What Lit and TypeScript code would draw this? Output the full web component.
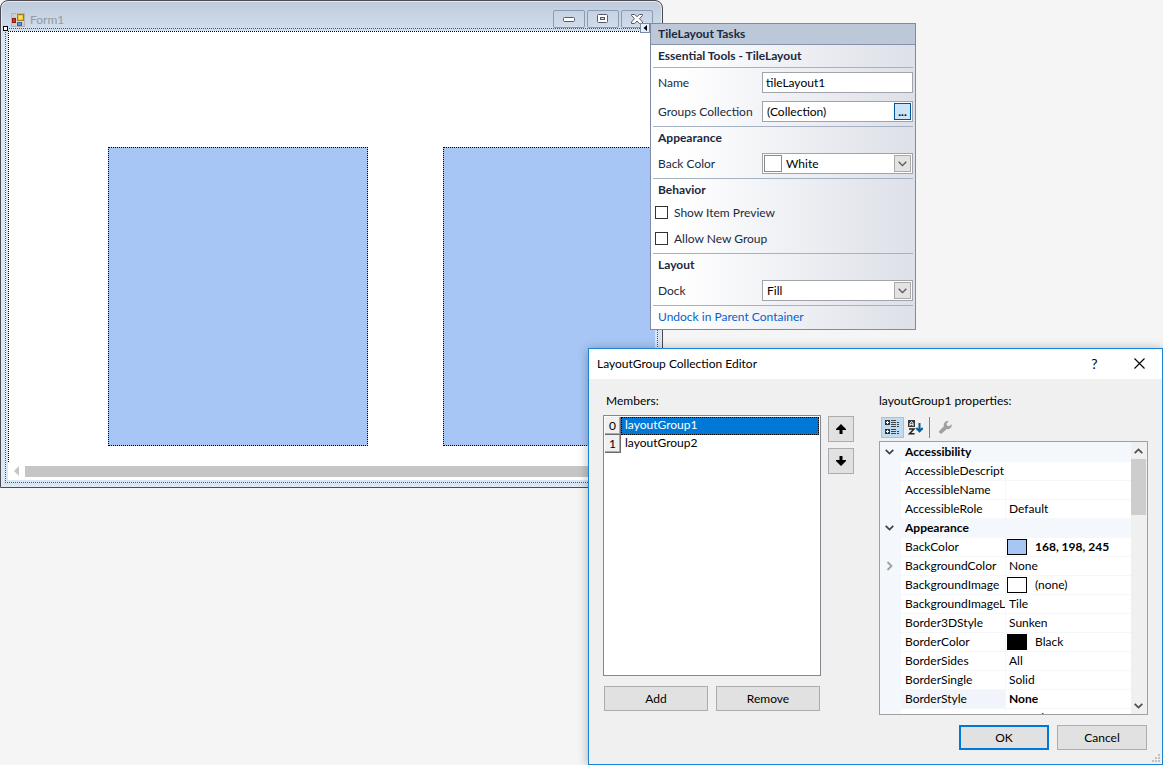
import { LitElement, html, css, svg, nothing } from "lit";
import { customElement, state } from "lit/decorators.js";
import { classMap } from "lit/directives/class-map.js";
import { styleMap } from "lit/directives/style-map.js";

const base = css`
  * { box-sizing: border-box; }
  button, input, select { font: inherit; color: inherit; margin: 0; }
  svg { display: block; }
`;

const chevron = html`<svg width="9" height="6" viewBox="0 0 9 6"><path d="M0.7 0.8L4.5 4.6L8.3 0.8" fill="none" stroke="#555" stroke-width="1.3"/></svg>`;

@customElement("design-form")
export class DesignForm extends LitElement {
  static styles = [base, css`
    :host { display: block; position: relative; border: 1px solid #4c4a50; border-radius: 8px 8px 0 0;
      background: linear-gradient(#bdcada, #d9e6f4 40px, #d9e6f4); padding: 0 7px 7px; box-shadow: inset 0 0 0 1px #e2ebf5; }
    .title { display: flex; align-items: center; height: 30px; padding: 8px 2px 0 3px; gap: 5px; color: #98999c; }
    .title h1 { font: inherit; font-size: 12px; margin: 0; flex: 1; }
    .controls { display: flex; gap: 2px; padding-bottom: 2px; }
    .controls button { width: 32px; height: 18px; padding: 0; display: grid; place-items: center;
      border: 1px solid #8c9bb5; border-radius: 2px; background: linear-gradient(#c5d2e2, #d0dceb); }
    .client { background: #fff; }
    .surface { border: 1px dotted #000; border-width: 1px 0 0 1px; padding: 115px 0 16px 99px; display: flex; gap: 75px; overflow: hidden; }
    .tile { flex: 0 0 260px; height: 299px; border: 1px dotted #000; background: #a8c6f5; }
    .scroll { display: flex; align-items: center; height: 18px; gap: 6px; padding: 0 17px 0 6px; }
    .thumb { flex: 1; height: 11px; background: #c5c5c5; }
    .selection { position: absolute; inset: 27px 4px 4px; border: 1px dotted #555; pointer-events: none; }
    .handle { position: absolute; left: 2px; top: 25px; width: 5px; height: 5px; border: 1px solid #000; background: #fff; }
    .tag { position: absolute; right: 12px; top: 22px; width: 10px; height: 10px; padding: 0; border: 1px solid #7d8ca5; background: #e3f0fb; display: grid; place-items: center; }
  `];
  render() {
    return html`
      <div class="title">
        <svg width="14" height="14" viewBox="0 0 14 14">
          <rect x=".5" y=".5" width="13" height="13" fill="#c9cdd2" stroke="#b3b3b3"/>
          <path d="M5.5 0.5v13M0.5 8.5h13" stroke="#d9d4cf"/>
          <rect x="6.5" y="1.5" width="6" height="6" fill="#f7c52c" stroke="#a87c1a"/><rect x="8" y="3" width="3" height="3" fill="#ffe27a"/>
          <rect x="1.5" y="5.5" width="3" height="4" fill="#d33a22" stroke="#8c1a10"/>
          <rect x="6.5" y="9.5" width="4" height="3" fill="#5a93ea" stroke="#2f62b8"/>
        </svg>
        <h1>Form1</h1>
        <div class="controls">
          <button aria-label="Minimize"><svg width="12" height="5" viewBox="0 0 12 5"><rect x=".5" y=".5" width="11" height="4" rx="1" fill="#fff" stroke="#5a5a66"/></svg></button>
          <button aria-label="Maximize"><svg width="12" height="10" viewBox="0 0 12 10"><rect x=".5" y=".5" width="10" height="8" rx="1" fill="#fff" stroke="#5a5a66"/><rect x="3.5" y="3.5" width="4" height="2" fill="#c8d4e4" stroke="#5a5a66"/></svg></button>
          <button aria-label="Close"><svg width="12" height="10" viewBox="0 0 12 10"><path d="M.5 .5h3.200L6 2.700 8.300.5h3.200v1L8.500 4.700l3 3.300v1.500H8.300L6 7 3.700 9.500H.5V8l3-3.300L.5 1.500z" fill="#fff" stroke="#5a5a66"/></svg></button>
        </div>
      </div>
      <div class="client">
        <div class="surface"><div class="tile"></div><div class="tile"></div></div>
        <div class="scroll">
          <svg width="5" height="10" viewBox="0 0 5 10"><path d="M5 0v10L0 5z" fill="#c5c5c5"/></svg>
          <div class="thumb"></div>
        </div>
      </div>
      <div class="selection"></div>
      <div class="handle"></div>
      <button class="tag" aria-label="Tasks"><svg width="4" height="6" viewBox="0 0 4 6"><path d="M4 0v6L.5 3z" fill="#000"/></svg></button>`;
  }
}

@customElement("task-panel")
export class TaskPanel extends LitElement {
  static styles = [base, css`
    :host { display: block; border: 1px solid #7f8ba5; color: #1b293e; background: linear-gradient(90deg, #fff 10%, #dde0e8); }
    h2, h3 { font-size: 12px; font-weight: bold; margin: 0; }
    h2 { height: 21px; line-height: 20px; padding-left: 7px; background: #bcc7d8; border-bottom: 1px solid #8592ab; }
    h3 { height: 22px; line-height: 22px; padding-left: 5px; }
    section { margin: 0 2px; }
    section + section { border-top: 1px solid #a6b1c5; }
    .rows { display: grid; gap: 8px; padding: 4px 0; }
    .row { display: grid; grid-template-columns: 109px minmax(0, 1fr); align-items: center; }
    .row label { padding-left: 5px; }
    .box { display: flex; align-items: center; height: 21px; border: 1px solid #a0a3aa; background: #fff; color: #000; padding: 1px; }
    .box input, .box select { flex: 1; min-width: 0; height: 17px; border: 0; background: none; padding: 0 3px 1px; outline: 0; appearance: none; line-height: 15px; }
    .box .text { padding: 0 2px 1px; }
    .box .swatch + select { padding-left: 4px; }
    .more { width: 17px; height: 17px; padding: 0; border: 1px solid #005499; background: #cce4f7; line-height: 12px; font-weight: bold; }
    .arrow { display: grid; place-items: center; width: 17px; height: 17px; border: 1px solid #a9a9a9; background: #e3e3e3; }
    .swatch { width: 18px; height: 17px; border: 1px solid #8a8a8a; background: #fff; }
    .checks { display: grid; gap: 13px; padding: 5px 0 8px 2px; }
    .checks label { display: flex; align-items: center; gap: 6px; height: 13px; }
    .checks input { appearance: none; width: 13px; height: 13px; border: 1px solid #333; background: #fff; }
    .checks input:checked { background: #333; box-shadow: inset 0 0 0 2px #fff; }
    .link { padding-left: 5px; height: 24px; line-height: 22px; }
    a { color: #0a61c9; text-decoration: none; }
  `];
  render() {
    return html`
      <h2>TileLayout Tasks</h2>
      <section><h3>Essential Tools - TileLayout</h3></section>
      <section class="rows">
        <div class="row"><label for="name">Name</label><div class="box"><input id="name" class="text" value="tileLayout1"></div></div>
        <div class="row"><label for="groups">Groups Collection</label><div class="box"><input id="groups" readonly value="(Collection)"><button class="more" aria-label="Edit collection">...</button></div></div>
      </section>
      <section>
        <h3>Appearance</h3>
        <div class="rows"><div class="row"><label for="back">Back Color</label><div class="box"><span class="swatch"></span><select id="back"><option>White</option></select><span class="arrow">${chevron}</span></div></div></div>
      </section>
      <section>
        <h3>Behavior</h3>
        <div class="checks">
          <label><input type="checkbox">Show Item Preview</label>
          <label><input type="checkbox">Allow New Group</label>
        </div>
      </section>
      <section>
        <h3>Layout</h3>
        <div class="rows"><div class="row"><label for="dock">Dock</label><div class="box"><select id="dock"><option>Fill</option></select><span class="arrow">${chevron}</span></div></div></div>
      </section>
      <section class="link"><a href="#undock">Undock in Parent Container</a></section>`;
  }
}

interface Prop { name: string; value?: string; swatch?: string; bold?: boolean; category?: boolean; expandable?: boolean; selected?: boolean; }

const PROPS: Prop[] = [
  { name: "Accessibility", category: true },
  { name: "AccessibleDescript" },
  { name: "AccessibleName" },
  { name: "AccessibleRole", value: "Default" },
  { name: "Appearance", category: true },
  { name: "BackColor", value: "168, 198, 245", swatch: "#a8c6f5", bold: true },
  { name: "BackgroundColor", value: "None", expandable: true },
  { name: "BackgroundImage", value: "(none)", swatch: "#fff" },
  { name: "BackgroundImageL", value: "Tile" },
  { name: "Border3DStyle", value: "Sunken" },
  { name: "BorderColor", value: "Black", swatch: "#000" },
  { name: "BorderSides", value: "All" },
  { name: "BorderSingle", value: "Solid" },
  { name: "BorderStyle", value: "None", bold: true, selected: true },
  { name: "Cursor", value: "Default" },
];

@customElement("property-grid")
export class PropertyGrid extends LitElement {
  static styles = [base, css`
    :host { display: flex; border: 1px solid #a0a0a0; background: #f4f7fc; overflow: hidden; }
    .view { flex: 1; padding-top: 1px; overflow: hidden; }
    table { width: 100%; table-layout: fixed; border-collapse: separate; border-spacing: 0; }
    .gutter { width: 21px; }
    .name { width: 105px; }
    td, th { height: 19px; padding: 0 0 0 3px; line-height: 18px; text-align: left; font-weight: normal; white-space: nowrap;
      overflow: hidden; border-bottom: 1px solid #f4f7fc; background: #fff; }
    th { padding-left: 4px; }
    th.cat { font-weight: bold; background: #f4f7fc; }
    td.mark { background: #f4f7fc; padding: 0 0 0 5px; }
    th.prop { border-right: 1px solid #f4f7fc; }
    th.selected { background: #f1f5fb; }
    td.bold { font-weight: bold; }
    td.swatched { padding-left: 1px; }
    .cell { display: flex; align-items: center; gap: 8px; height: 18px; }
    .swatch { width: 20px; height: 16px; border: 1px solid #000; }
    .bar { width: 16px; padding-right: 1px; display: flex; flex-direction: column; background: #f0f0f0; }
    .bar .arrow { height: 17px; display: grid; place-items: center; }
    .thumb { height: 56px; background: #cdcdcd; }
    .rest { flex: 1; }
  `];
  render() {
    const row = (p: Prop) => p.category
      ? html`<tr><td class="mark"><svg width="9" height="6" viewBox="0 0 9 6"><path d="M.7 .8L4.5 4.6L8.3 .8" fill="none" stroke="#444" stroke-width="1.8"/></svg></td><th class="cat" colspan="2">${p.name}</th></tr>`
      : html`<tr>
          <td class="mark">${p.expandable ? html`<svg width="9" height="10" viewBox="0 0 9 10"><path d="M2.5 1L6.5 5L2.5 9" fill="none" stroke="#a0a0a0" stroke-width="1.8"/></svg>` : nothing}</td>
          <th class=${classMap({ prop: true, selected: !!p.selected })} scope="row">${p.name}</th>
          <td class=${classMap({ bold: !!p.bold, swatched: !!p.swatch })}>${p.swatch
            ? html`<div class="cell"><span class="swatch" style=${styleMap({ background: p.swatch })}></span>${p.value}</div>`
            : p.value ?? nothing}</td></tr>`;
    return html`
      <div class="view"><table><colgroup><col class="gutter"><col class="name"><col></colgroup><tbody>${PROPS.map(row)}</tbody></table></div>
      <div class="bar">
        <div class="arrow"><svg width="9" height="6" viewBox="0 0 9 6"><path d="M.7 5.2L4.5 1.4L8.3 5.2" fill="none" stroke="#505050" stroke-width="1.8"/></svg></div>
        <div class="thumb"></div><div class="rest"></div>
        <div class="arrow"><svg width="9" height="6" viewBox="0 0 9 6"><path d="M.7 .8L4.5 4.6L8.3 .8" fill="none" stroke="#505050" stroke-width="1.8"/></svg></div>
      </div>`;
  }
}

@customElement("collection-editor")
export class CollectionEditor extends LitElement {
  @state() private selected = 0;
  private members = ["layoutGroup1", "layoutGroup2"];
  static styles = [base, css`
    :host { display: block; border: 1px solid #1883d7; background: #f0f0f0; color: #000; box-shadow: 0 1px 10px rgba(0, 0, 0, .3); }
    header { display: flex; align-items: flex-start; height: 30px; background: #fff; padding: 0 0 0 8px; }
    header h2 { flex: 1; font-size: 12px; line-height: 30px; font-weight: normal; margin: 0; }
    header button { width: 45px; height: 29px; padding: 0; border: 0; background: none; display: grid; place-items: center; }
    header .help { font-size: 14px; }
    .body { display: grid; grid-template-columns: 218px 26px minmax(0, 1fr); padding: 12px 14px 0 14px; }
    .caption { height: 24px; line-height: 20px; padding-left: 3px; }
    .list { list-style: none; margin: 0; padding: 1px; height: 261px; border: 1px solid #828790; background: #fff; }
    .list li { display: flex; height: 18px; }
    .index { width: 16px; background: #f0f0f0; border: 1px solid #6d6d6d; border-width: 0 1px 1px 0; box-shadow: inset -1px -1px 0 #a8a8a8; text-align: center; line-height: 17px; }
    .item { flex: 1; text-align: left; border: 1px dotted transparent; background: none; padding: 0 0 2px 3px; line-height: 14px; }
    .item.on { background: #0078d7; color: #fff; border-color: #000; }
    .actions { display: grid; grid-template-columns: 1fr 1fr; gap: 8px; padding: 10px 1px 0; }
    .push { height: 25px; border: 1px solid #adadad; background: #e1e1e1; padding: 0; }
    .move { display: grid; gap: 6px; align-content: start; padding-top: 25px; margin-left: 7px; width: 26px; }
    .move button { width: 26px; height: 26px; display: grid; place-items: center; }
    .props { padding-left: 32px; }
    .props .caption { padding-left: 0; }
    .tools { display: flex; height: 26px; padding: 2px 2px 3px; align-items: center; }
    .tools button { height: 21px; padding: 0; border: 0; background: none; display: grid; place-items: center; }
    .tools .cat { width: 23px; border: 1px solid #90c8f6; background: #c0dcf3; }
    .tools .az { width: 22px; }
    .tools .page { width: 30px; }
    .sep { width: 1px; height: 21px; margin-left: 3px; background: #808080; }
    property-grid { height: 274px; }
    footer { display: flex; justify-content: flex-end; gap: 8px; padding: 10px 15px 14px; position: relative; }
    footer .push { width: 90px; }
    footer .ok { border: 2px solid #0078d7; }
    .grip { position: absolute; right: 1px; bottom: 1px; }
  `];
  private arrow(up: boolean) {
    return html`<svg width="10" height="10" viewBox="0 0 10 10"><path d=${up ? "M5 0L10 5v1H6.5v4h-3V6H0V5z" : "M5 10L10 5V4H6.5V0h-3v4H0v1z"} fill="#000"/></svg>`;
  }
  render() {
    const dots = [[6, 0], [3, 3], [6, 3], [0, 6], [3, 6], [6, 6]];
    return html`
      <header><h2>LayoutGroup Collection Editor</h2>
        <button class="help" aria-label="Help">?</button>
        <button aria-label="Close"><svg width="11" height="11" viewBox="0 0 11 11"><path d="M.5 .5l10 10M10.5 .5l-10 10" stroke="#000" stroke-width="1.1"/></svg></button>
      </header>
      <div class="body">
        <div>
          <div class="caption" id="members">Members:</div>
          <ul class="list" aria-labelledby="members">${this.members.map((m, i) => html`
            <li><span class="index">${i}</span><button class=${classMap({ item: true, on: i === this.selected })} @click=${() => (this.selected = i)}>${m}</button></li>`)}</ul>
          <div class="actions"><button class="push">Add</button><button class="push">Remove</button></div>
        </div>
        <div class="move"><button class="push" aria-label="Move up">${this.arrow(true)}</button><button class="push" aria-label="Move down">${this.arrow(false)}</button></div>
        <div class="props">
          <div class="caption">layoutGroup1 properties:</div>
          <div class="tools">
            <button class="cat" aria-label="Categorized"><svg width="15" height="15" viewBox="0 0 15 15">
              ${[0, 9].map(y => svg`<path d="M0 ${y}h5v5h-5z" fill="#333"/><path d="M1 ${y + 2.5}h3M2.5 ${y + 1}v3" stroke="#fff"/>`)}
              <path d="M6 .5h5M6 2.5h5M6 4.5h5M6 6.5h5M6 9.5h5M6 11.5h5M6 13.5h5M12 2.5h2M12 4.5h2M12 6.5h2M12 11.5h2M12 13.5h2" stroke="#444"/></svg></button>
            <button class="az" aria-label="Alphabetical"><svg width="15" height="15" viewBox="0 0 15 15">
              <path d="M0 0h7v7h-7z" fill="#3a3a3a"/><path d="M2 6V3.3L3.5 1.5L5 3.3V6M2 4.3h3" fill="none" stroke="#fff"/>
              <path d="M1 9h5L1.5 13.8h5" fill="none" stroke="#222" stroke-width="1.5"/>
              <path d="M11.5 3v8M8.3 8l3.2 3.4L14.7 8" fill="none" stroke="#00609c" stroke-width="2"/></svg></button>
            <span class="sep"></span>
            <button class="page" aria-label="Property Pages" disabled><svg width="13" height="13" viewBox="0 0 13 13"><path d="M9.800 .4A3.700 3.700 0 0 0 5 5.200L.7 9.500a1.700 1.700 0 0 0 2.600 2.600L7.800 7.900A3.700 3.700 0 0 0 12.500 3.200L10.300 5.200 8 4.800 7.600 2.600z" fill="#a0a0a0"/></svg></button>
          </div>
          <property-grid></property-grid>
        </div>
      </div>
      <footer><button class="push ok">OK</button><button class="push">Cancel</button>
        <svg class="grip" width="9" height="9" viewBox="0 0 9 9">${dots.map(([x, y]) => svg`<rect x=${x} y=${y} width="2" height="2" fill="#bfbfbf"/>`)}</svg>
      </footer>`;
  }
}

@customElement("app-root")
export class AppRoot extends LitElement {
  static styles = css`
    :host { display: block; position: relative; min-height: 100vh; overflow: hidden; background: #f5f5f5;
      font: 12px/16px Lato, "Open Sans", sans-serif; }
    design-form, task-panel, collection-editor { position: absolute; box-sizing: border-box; }
    design-form { left: 0; top: 0; width: 663px; }
    task-panel { left: 650px; top: 23px; width: 266px; }
    collection-editor { left: 588px; top: 348px; width: 575px; }
  `;
  render() {
    return html`<design-form></design-form><task-panel></task-panel><collection-editor></collection-editor>`;
  }
}
